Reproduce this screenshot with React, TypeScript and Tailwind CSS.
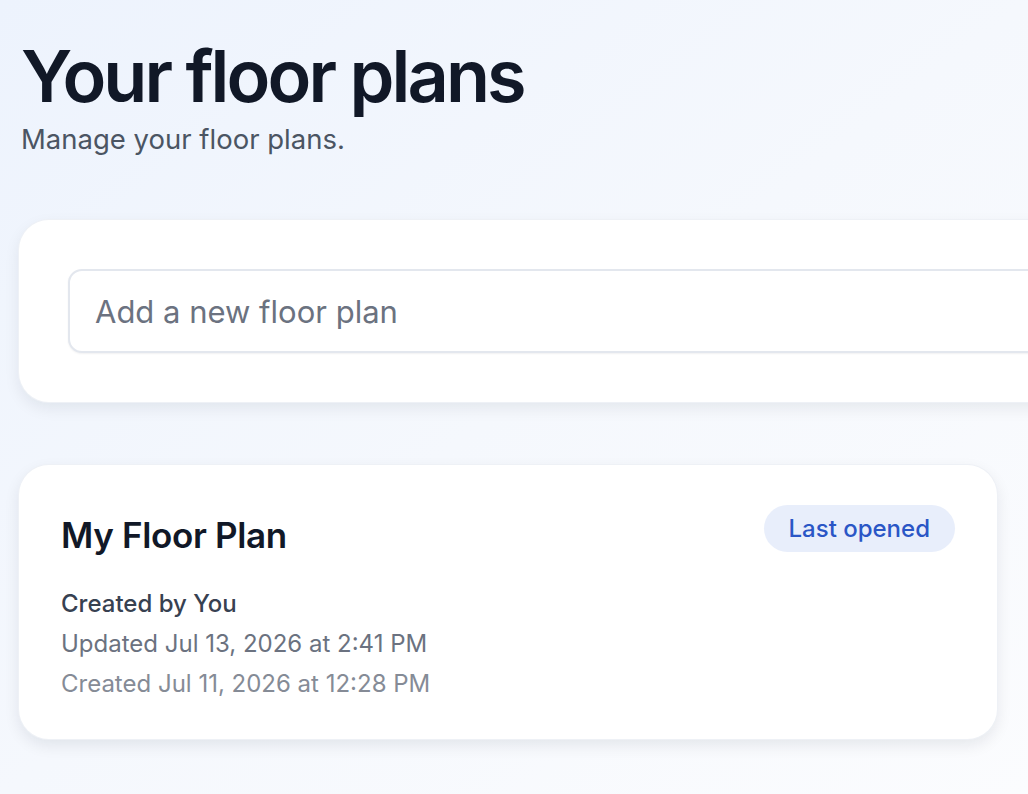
export default function App() {
  return (
    <div
      className="min-h-screen w-full overflow-hidden bg-gradient-to-br from-[#edf3fd] via-[#f5f8fd] to-[#fbfcfe] px-[19px] pt-[40px]"
      style={{ fontFamily: "Inter, 'Noto Sans', sans-serif" }}
    >
      <h1 className="pl-[2px] text-[72px] font-semibold leading-none tracking-[-0.04em] text-[#111827]">
        Your floor plans
      </h1>
      <p className="mt-[10px] pl-[2px] text-[27.5px] leading-[34px] text-[#4b5563]">Manage your floor plans.</p>

      <div className="mt-[64px] w-[1080px] rounded-[30px] bg-white px-[49px] py-[49px] shadow-[0_6px_16px_rgba(15,23,42,0.08)] ring-1 ring-[#eef1f6]">
        <input
          type="text"
          placeholder="Add a new floor plan"
          className="h-[84px] w-full rounded-[14px] border-2 border-[#e3e7ee] bg-white px-[25px] text-[31px] text-[#111827] placeholder:text-[#6b7280] outline-none shadow-[0_1px_2px_rgba(15,23,42,0.06)]"
        />
      </div>

      <div className="mt-[63px] w-[978px] rounded-[30px] bg-white px-[42px] pt-[40px] pb-[39px] shadow-[0_6px_16px_rgba(15,23,42,0.09)] ring-1 ring-[#eef1f6]">
        <div className="flex items-start justify-between">
          <h2 className="mt-[10px] text-[35px] font-semibold leading-[40px] tracking-[-0.01em] text-[#111827]">My Floor Plan</h2>
          <span className="flex h-[47px] items-center rounded-full bg-[#e8eefb] px-[25px] text-[24px] font-medium text-[#2a56c6]">
            Last opened
          </span>
        </div>
        <div className="mt-[33px] flex flex-col gap-[8px] text-[24px] leading-[32px]">
          <p className="font-medium text-[#374151]">Created by You</p>
          <p className="text-[#6b7280]">Updated Jul 13, 2026 at 2:41 PM</p>
          <p className="text-[#858b96]">Created Jul 11, 2026 at 12:28 PM</p>
        </div>
      </div>
    </div>
  );
}
